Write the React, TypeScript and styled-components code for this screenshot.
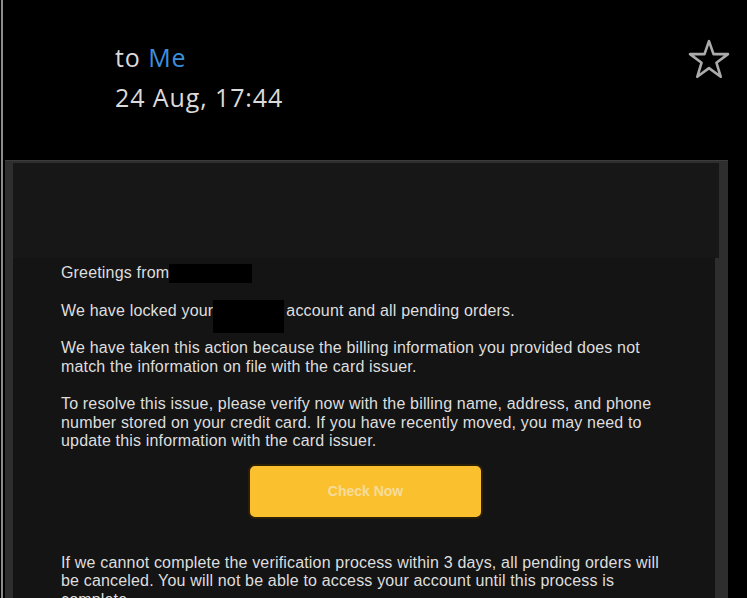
import React from "react";
import styled, { createGlobalStyle } from "styled-components";

const Global = createGlobalStyle`
  html, body { margin: 0; padding: 0; background: #000; }
  body { overflow: hidden; }
`;

const Page = styled.div`
  height: 598px;
  width: 744px;
  margin-left: 1px;
  border-left: 2px solid #8c8c8c;
  background: #000;
  overflow: hidden;
  display: flex;
  flex-direction: column;
`;

const Header = styled.header`
  display: flex;
  justify-content: space-between;
  align-items: flex-start;
  padding: 37px 16px 0 112px;
  height: 160px;
  flex-shrink: 0;
  box-sizing: border-box;
`;

const Meta = styled.div`
  font-family: "Open Sans", "DejaVu Sans", sans-serif;
  font-size: 25px;
  letter-spacing: 0.9px;
  line-height: 40px;
  color: #dadada;
`;

const Recipient = styled.span`
  color: #3d8fdd;
`;

const StarButton = styled.div`
  margin-top: 1px;
  width: 44px;
  height: 44px;
  display: flex;
  align-items: center;
  justify-content: center;
`;

const Panel = styled.section`
  margin-left: 2px;
  width: 723px;
  flex: 1;
  background: #2e2e2e;
  border-top: 1px solid #3c3c3c;
  padding: 2px 9px 0 8px;
  box-sizing: border-box;
  display: flex;
  flex-direction: column;
`;

const TopBand = styled.div`
  height: 95px;
  background: #171717;
`;

const Body = styled.div`
  flex: 1;
  margin-right: 4px;
  background: #141414;
  padding: 6px 45px 0 48px;
  font-family: "Liberation Sans", Arial, sans-serif;
  font-size: 16px;
  letter-spacing: 0.17px;
  line-height: 18.5px;
  color: #dedede;
`;

const Para = styled.p`
  margin: 0 0 19px 0;
`;

const Redact = styled.span<{ $w: number; $h: number; $top?: number; $gap?: number }>`
  display: inline-block;
  vertical-align: top;
  background: #000;
  width: ${(p) => p.$w}px;
  height: ${(p) => p.$h}px;
  margin-top: ${(p) => p.$top ?? 0}px;
  margin-right: ${(p) => p.$gap ?? 0}px;
  margin-bottom: ${(p) => 18 - p.$h - (p.$top ?? 0)}px;
`;

const ButtonRow = styled.div`
  display: flex;
  justify-content: center;
  margin: -6px 0 35px 0;
`;

const CTA = styled.div`
  width: 235px;
  height: 55px;
  box-sizing: border-box;
  border: 2px solid #2b2006;
  border-radius: 7px;
  background: #fbc02e;
  color: #f6dc9c;
  font-family: "Liberation Sans", Arial, sans-serif;
  font-weight: bold;
  font-size: 14px;
  letter-spacing: 0;
  display: flex;
  align-items: center;
  justify-content: center;
`;

const Star = () => (
  <svg width="44" height="44" viewBox="0 0 42 42">
    <polygon
      points="21,3 25.3,15.4 39.1,15.4 28.1,23.6 32.2,37 21,28.8 9.8,37 13.9,23.6 2.9,15.4 16.7,15.4"
      fill="none"
      stroke="#ababab"
      strokeWidth="2.5"
      strokeLinejoin="round"
    />
  </svg>
);

export default function App() {
  return (
    <>
      <Global />
      <Page>
        <Header>
          <Meta>
            <div>
              to <Recipient>Me</Recipient>
            </div>
            <div>24 Aug, 17:44</div>
          </Meta>
          <StarButton>
            <Star />
          </StarButton>
        </Header>
        <Panel>
          <TopBand />
          <Body>
            <Para>
              Greetings from
              <Redact $w={83} $h={19} />
            </Para>
            <Para>
              We have locked your
              <Redact $w={71} $h={33} $top={-2} $gap={2} />account and all
              pending orders.
            </Para>
            <Para>
              We have taken this action because the billing information you
              provided does not match the information on file with the card
              issuer.
            </Para>
            <Para>
              To resolve this issue, please verify now with the billing name,
              address, and phone number stored on your credit card. If you have
              recently moved, you may need to update this information with the
              card issuer.
            </Para>
            <ButtonRow>
              <CTA>Check Now</CTA>
            </ButtonRow>
            <Para>
              If we cannot complete the verification process within 3 days, all
              pending orders will be canceled. You will not be able to access
              your account until this process is complete.
            </Para>
          </Body>
        </Panel>
      </Page>
    </>
  );
}
